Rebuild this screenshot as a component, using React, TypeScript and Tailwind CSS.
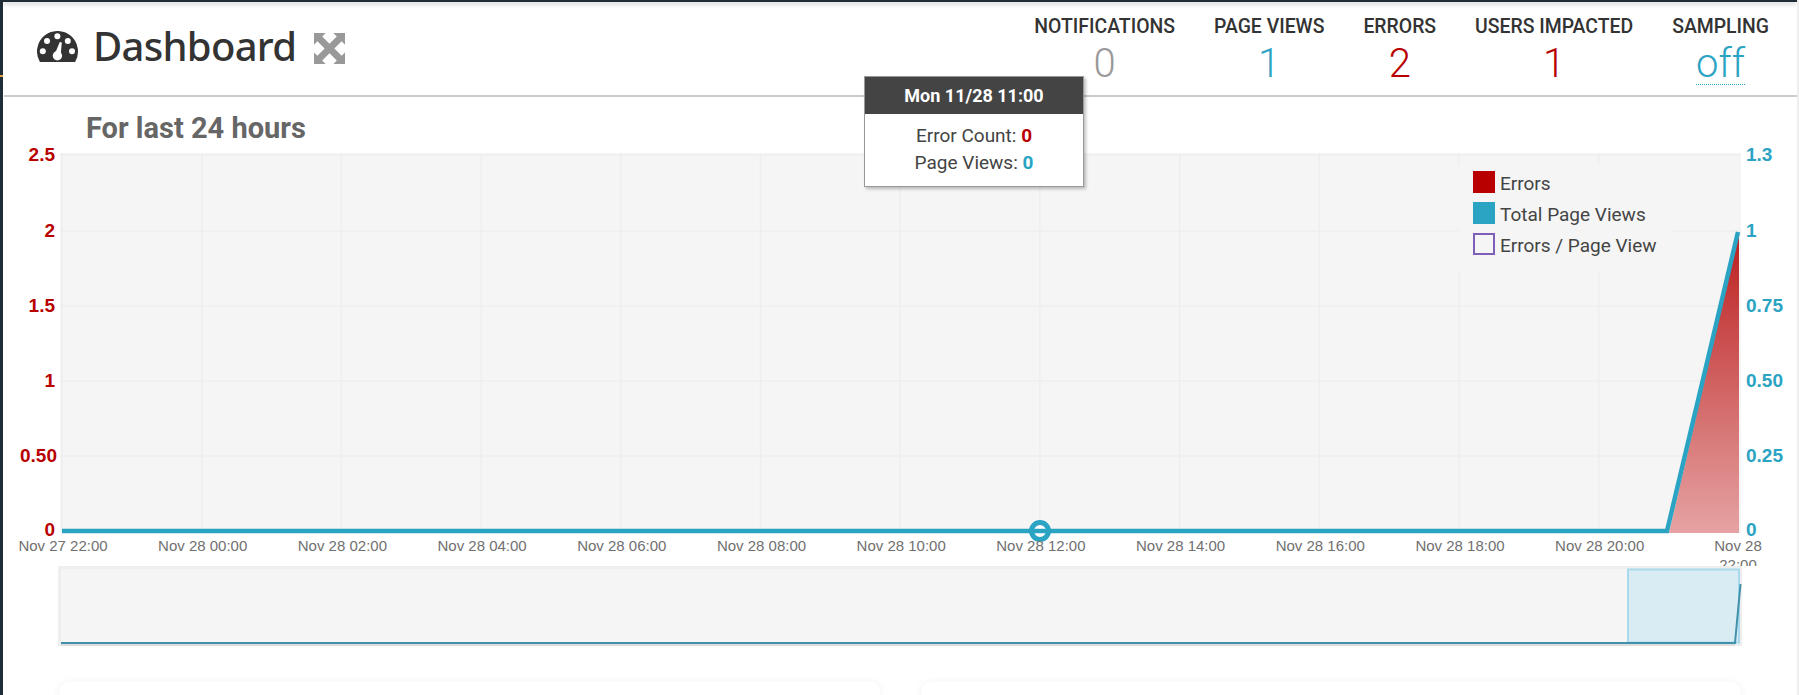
const xLabels = [
  "Nov 27 22:00", "Nov 28 00:00", "Nov 28 02:00", "Nov 28 04:00", "Nov 28 06:00", "Nov 28 08:00",
  "Nov 28 10:00", "Nov 28 12:00", "Nov 28 14:00", "Nov 28 16:00", "Nov 28 18:00", "Nov 28 20:00",
];
const leftTicks = [["2.5", 155, 55], ["2", 231, 55], ["1.5", 306, 55], ["1", 381, 55], ["0.50", 456, 57], ["0", 530, 55]] as const;
const rightTicks = [["1.3", 155], ["1", 231], ["0.75", 306], ["0.50", 381], ["0.25", 456], ["0", 530]] as const;
const stats = [
  { label: "NOTIFICATIONS", value: "0", color: "text-[#999999]" },
  { label: "PAGE VIEWS", value: "1", color: "text-[#2ba3c3]" },
  { label: "ERRORS", value: "2", color: "text-[#b80000]" },
  { label: "USERS IMPACTED", value: "1", color: "text-[#b80000]" },
];

const Gauge = () => (
  <svg width="42" height="32" viewBox="37 32 42 32" className="shrink-0">
    <path d="M39.9 63 A20.5 20.5 0 1 1 75.1 63 Z" fill="#333" />
    <g fill="#fff">
      <circle cx="42.8" cy="52.3" r="3" />
      <circle cx="47" cy="42" r="3" />
      <circle cx="57.4" cy="37.3" r="3" />
      <circle cx="67.8" cy="42" r="3" />
      <circle cx="72" cy="52.3" r="3" />
      <circle cx="57.4" cy="56.7" r="4.7" />
      <path d="M54.8 55 L59.8 43 L61.8 43.6 L60.5 58 Z" />
    </g>
  </svg>
);

const Expand = () => (
  <svg width="31" height="31" viewBox="0 0 32 32" className="shrink-0">
    <path d="M0 0 H12 L8.5 3.5 L16 11 L23.5 3.5 L20 0 H32 V12 L28.5 8.5 L21 16 L28.5 23.5 L32 20 V32 H20 L23.5 28.5 L16 21 L8.5 28.5 L12 32 H0 V20 L3.5 23.5 L11 16 L3.5 8.5 L0 12 Z" fill="#999" />
  </svg>
);

const MainChart = () => (
  <svg width="1796" height="440" viewBox="3 140 1796 440" className="block">
    <defs>
      <linearGradient id="errFill" x1="0" y1="0" x2="0" y2="1">
        <stop offset="0" stopColor="#bb1f1f" />
        <stop offset="1" stopColor="#e6a3a3" />
      </linearGradient>
    </defs>
    <rect x="60" y="153" width="1681" height="380" fill="#f5f5f5" />
    <g stroke="#eeeeee" strokeWidth="1.5">
      {Array.from({ length: 12 }, (_, i) => (
        <line key={i} x1={62 + 139.7 * i} x2={62 + 139.7 * i} y1="153" y2="531" />
      ))}
      {[155, 231, 306, 381, 456].map((y) => (
        <line key={y} x1="60" x2="1741" y1={y} y2={y} />
      ))}
    </g>
    <path d="M1669 533 L1739 232 V533 Z" fill="url(#errFill)" />
    <circle cx="1040" cy="531" r="8.5" fill="#fff" stroke="#2ba3c3" strokeWidth="5" />
    <path d="M62 531 H1667 L1738 232" fill="none" stroke="#2ba3c3" strokeWidth="4.5" />
    <g fontFamily="Liberation Sans, Arial, sans-serif" fontSize="19" fontWeight="700">
      {leftTicks.map(([t, y, x]) => (
        <text key={y} x={x} y={y + 6} textAnchor="end" fill="#b80000">{t}</text>
      ))}
      {rightTicks.map(([t, y]) => (
        <text key={y} x="1746" y={y + 6} fill="#2ba3c3">{t}</text>
      ))}
    </g>
    <g fontFamily="Liberation Sans, Arial, sans-serif" fontSize="15" fill="#707070">
      {xLabels.map((t, i) => (
        <text key={t} x={63 + 139.7 * i} y="551" textAnchor="middle">{t}</text>
      ))}
      <text x="1738" y="551" textAnchor="middle">Nov 28</text>
      <text x="1738" y="570" textAnchor="middle">22:00</text>
    </g>
  </svg>
);

const MiniChart = () => (
  <svg width="1796" height="80" viewBox="3 566 1796 80" className="block">
    <rect x="59.5" y="567.5" width="1681" height="77" fill="#f5f5f5" stroke="#eeeeee" strokeWidth="3" />
    <line x1="61" x2="1735" y1="645" y2="645" stroke="#cccccc" strokeWidth="1" />
    <rect x="1628" y="569.5" width="111" height="73" fill="#d9ebf3" stroke="#a9d9ec" strokeWidth="2" />
    <path d="M61 643 H1735 L1740.5 584" fill="none" stroke="#4291aa" strokeWidth="2" />
  </svg>
);

export default function App() {
  return (
    <div className="relative flex h-[695px] w-full overflow-hidden bg-white font-['Roboto',sans-serif]">
      <div className="w-[3px] shrink-0 bg-[#1f2d38]">
        <div className="mt-[75px] h-[2px] bg-[#e0a040]" />
      </div>
      <div className="min-w-0 flex-1">
        <div className="h-[2px] bg-[#1f2d38] shadow-[0_2px_4px_rgba(0,0,0,0.25)]" />
        <header className="ml-px flex h-[95px] items-start justify-between border-b-2 border-[#cccccc]">
          <div className="flex items-start pl-[33px] pt-[29px]">
            <Gauge />
            <h1 className="ml-[14px] -mt-[5px] font-['Noto_Sans',sans-serif] text-[40px] font-medium leading-[40px] tracking-[-0.7px] text-[#333333]">Dashboard</h1>
            <div className="ml-[18px] pt-[2px]"><Expand /></div>
          </div>
          <div className="flex gap-[39px] pr-[28px] pt-[15px]">
            {stats.map((s) => (
              <div key={s.label} className="text-center">
                <div className="text-[19.4px] font-medium leading-[20px] text-[#333333]">{s.label}</div>
                <div className={`mt-[4px] text-[40px] font-light leading-[46px] ${s.color}`}>{s.value}</div>
              </div>
            ))}
            <div className="text-center">
              <div className="text-[19.4px] font-medium leading-[20px] text-[#333333]">SAMPLING</div>
              <div className="mt-[4px] text-[40px] font-light leading-[46px] text-[#2ba3c3]">
                <span className="inline-block border-b border-dotted border-[#2ba3c3] leading-[40px]">off</span>
              </div>
            </div>
          </div>
        </header>
        <h2 className="ml-[83px] mt-[16px] text-[29px] font-bold leading-[30px] text-[#666666]">For last 24 hours</h2>
        <div className="-mt-[3px] h-[426px] overflow-hidden">
          <MainChart />
        </div>
        <MiniChart />
        <div className="ml-[56px] mr-[56px] mt-[36px] flex gap-[41px]">
          <div className="h-[40px] w-[821px] rounded-[10px] bg-white shadow-[0_0_8px_rgba(0,0,0,0.06)]" />
          <div className="h-[40px] flex-1 rounded-[10px] bg-white shadow-[0_0_8px_rgba(0,0,0,0.06)]" />
        </div>
      </div>
      <div className="w-[2px] shrink-0 bg-[#eeeeee]" />

      <div className="absolute left-[864px] top-[76px] w-[220px] border border-[#999999] bg-white text-center shadow-[2px_2px_3px_rgba(0,0,0,0.25)]">
        <div className="bg-[#444444] py-[8px] text-[18px] font-bold leading-[21px] text-white">Mon 11/28 11:00</div>
        <div className="pb-[10px] pt-[8px] text-[19px] leading-[27px] text-[#444444]">
          <div>Error Count: <b className="text-[#b80000]">0</b></div>
          <div>Page Views: <b className="text-[#2ba3c3]">0</b></div>
        </div>
      </div>

      <div className="absolute left-[1458px] top-[164px] flex w-[215px] flex-col gap-[9px] bg-[#f5f5f5]/80 pb-[18px] pl-[15px] pt-[7px] text-[19px] text-[#444444]">
        <div className="flex h-[22px] items-start gap-[5px]"><span className="h-[22px] w-[22px] bg-[#b80000]" /><span className="leading-[26px]">Errors</span></div>
        <div className="flex h-[22px] items-start gap-[5px]"><span className="h-[22px] w-[22px] bg-[#2ba3c3]" /><span className="leading-[26px]">Total Page Views</span></div>
        <div className="flex h-[22px] items-start gap-[5px]"><span className="h-[22px] w-[22px] border-2 border-[#7e5fb8] bg-[#f5f5f5]" /><span className="leading-[26px]">Errors / Page View</span></div>
      </div>
    </div>
  );
}
